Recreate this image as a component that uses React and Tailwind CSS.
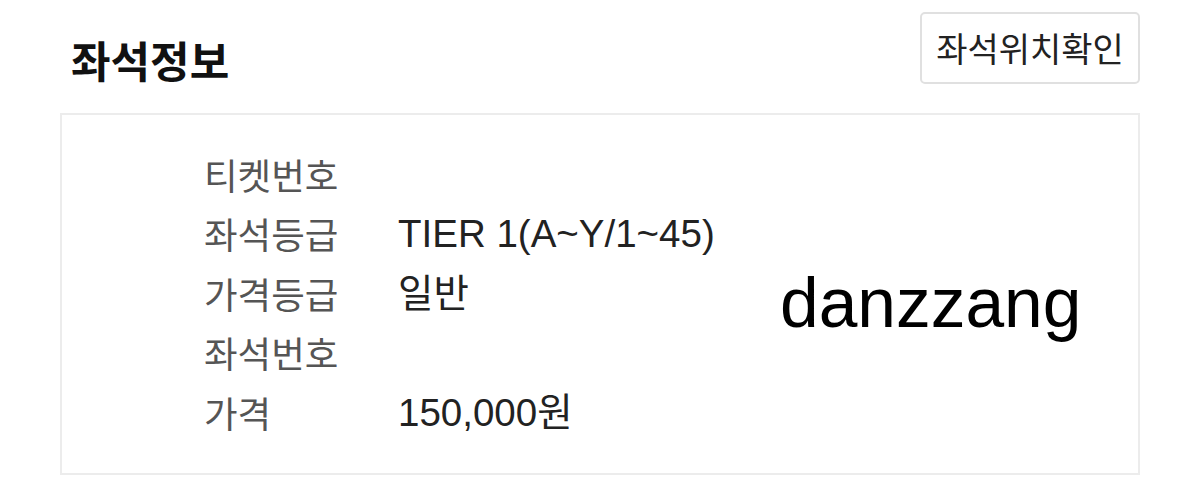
import React from 'react';

// Seat info card: header with title + locate button, then a bordered detail list
const seatRows = [
  { label: '티켓번호', value: '' },
  { label: '좌석등급', value: 'TIER 1(A~Y/1~45)' },
  { label: '가격등급', value: '일반' },
  { label: '좌석번호', value: '' },
  { label: '가격', value: '150,000원' },
];

const App = () => {
  return (
    <div
      className="w-[1200px] h-[495px] bg-white px-[60px] pt-[12px]"
      style={{ fontFamily: '"Liberation Sans", "Noto Sans CJK KR", sans-serif' }}
    >
      {/* Header */}
      <div className="flex justify-between items-start h-[101px]">
        <h1 className="mt-[26px] ml-[11px] text-[43px] leading-[43px] font-bold text-[#111] font-['Noto_Sans_CJK_KR',sans-serif]">
          좌석정보
        </h1>
        <button
          type="button"
          className="w-[220px] h-[72px] border-2 border-[#e0e0e0] rounded-[5px] bg-white text-[34px] leading-none text-[#222] font-['Noto_Sans_CJK_KR',sans-serif]"
        >
          좌석위치확인
        </button>
      </div>

      {/* Details box */}
      <div className="h-[362px] border-2 border-[#ececec] flex items-center">
        <div className="w-[718px] pl-[142px]">
          {seatRows.map((row) => (
            <div key={row.label} className="flex h-[59.5px] items-center">
              <span className="w-[194px] text-[36.5px] leading-none text-[#555] font-['Noto_Sans_CJK_KR',sans-serif]">
                {row.label}
              </span>
              <span className="text-[38.5px] leading-none text-[#222]">{row.value}</span>
            </div>
          ))}
        </div>
        <div className="mt-[20px] text-[69.5px] leading-none text-black">danzzang</div>
      </div>
    </div>
  );
};

export default App;
